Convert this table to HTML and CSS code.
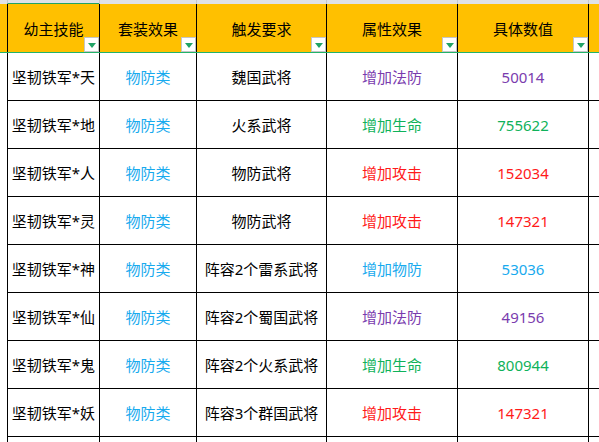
FILE: index.html
```html
<!DOCTYPE html>
<html lang="zh-CN">
<head>
    <meta charset="UTF-8">
    <title>幼主技能</title>
    <link rel="stylesheet" href="styles.css">
</head>
<body>
    <div class="sheet">
        <div class="colbar">
            <span class="gut"></span>
            <span class="c1 sel"></span>
            <span class="c2"></span>
            <span class="c3"></span>
            <span class="c4"></span>
            <span class="c5"></span>
            <span class="tail"></span>
        </div>

        <div class="row head">
            <div class="gut"></div>
            <div class="cell c1">幼主技能<i class="drop"></i></div>
            <div class="cell c2">套装效果<i class="drop"></i></div>
            <div class="cell c3">触发要求<i class="drop"></i></div>
            <div class="cell c4">属性效果<i class="drop"></i></div>
            <div class="cell c5">具体数值<i class="drop"></i></div>
            <div class="cell tail"></div>
        </div>

        <div class="row">
            <div class="gut"></div>
            <div class="cell c1">坚韧铁军*天</div>
            <div class="cell c2 blue">物防类</div>
            <div class="cell c3">魏国武将</div>
            <div class="cell c4 purple">增加法防</div>
            <div class="cell c5 purple">50014</div>
            <div class="cell tail"></div>
        </div>
        <div class="row">
            <div class="gut"></div>
            <div class="cell c1">坚韧铁军*地</div>
            <div class="cell c2 blue">物防类</div>
            <div class="cell c3">火系武将</div>
            <div class="cell c4 green">增加生命</div>
            <div class="cell c5 green">755622</div>
            <div class="cell tail"></div>
        </div>
        <div class="row">
            <div class="gut"></div>
            <div class="cell c1">坚韧铁军*人</div>
            <div class="cell c2 blue">物防类</div>
            <div class="cell c3">物防武将</div>
            <div class="cell c4 red">增加攻击</div>
            <div class="cell c5 red">152034</div>
            <div class="cell tail"></div>
        </div>
        <div class="row">
            <div class="gut"></div>
            <div class="cell c1">坚韧铁军*灵</div>
            <div class="cell c2 blue">物防类</div>
            <div class="cell c3">物防武将</div>
            <div class="cell c4 red">增加攻击</div>
            <div class="cell c5 red">147321</div>
            <div class="cell tail"></div>
        </div>
        <div class="row">
            <div class="gut"></div>
            <div class="cell c1">坚韧铁军*神</div>
            <div class="cell c2 blue">物防类</div>
            <div class="cell c3">阵容2个雷系武将</div>
            <div class="cell c4 blue">增加物防</div>
            <div class="cell c5 blue">53036</div>
            <div class="cell tail"></div>
        </div>
        <div class="row">
            <div class="gut"></div>
            <div class="cell c1">坚韧铁军*仙</div>
            <div class="cell c2 blue">物防类</div>
            <div class="cell c3">阵容2个蜀国武将</div>
            <div class="cell c4 purple">增加法防</div>
            <div class="cell c5 purple">49156</div>
            <div class="cell tail"></div>
        </div>
        <div class="row">
            <div class="gut"></div>
            <div class="cell c1">坚韧铁军*鬼</div>
            <div class="cell c2 blue">物防类</div>
            <div class="cell c3">阵容2个火系武将</div>
            <div class="cell c4 green">增加生命</div>
            <div class="cell c5 green">800944</div>
            <div class="cell tail"></div>
        </div>
        <div class="row">
            <div class="gut"></div>
            <div class="cell c1">坚韧铁军*妖</div>
            <div class="cell c2 blue">物防类</div>
            <div class="cell c3">阵容3个群国武将</div>
            <div class="cell c4 red">增加攻击</div>
            <div class="cell c5 red">147321</div>
            <div class="cell tail"></div>
        </div>
        <div class="row">
            <div class="gut"></div>
            <div class="cell c1"></div>
            <div class="cell c2"></div>
            <div class="cell c3"></div>
            <div class="cell c4"></div>
            <div class="cell c5"></div>
            <div class="cell tail"></div>
        </div>
    </div>
</body>
</html>
```

FILE: styles.css
```css
* {
    margin: 0;
    padding: 0;
    box-sizing: border-box;
}

html, body {
    height: 100%;
    overflow: hidden;
    background: #fff;
}

body {
    font-family: "Noto Sans", "Noto Sans CJK SC", sans-serif;
    font-size: 15px;
    color: #000;
}

.sheet {
    width: 599px;
    height: 442px;
    overflow: hidden;
}

/* column letter strip, mostly cut off */
.colbar {
    display: flex;
    height: 4px;
    background: #dfe2e8;
}

.colbar span {
    display: block;
    height: 4px;
    border-left: 1px solid #c3c8d0;
}

.colbar .gut {
    border-left: none;
}

.colbar .sel {
    border-bottom: 1px solid #21a366;
}

.row {
    display: flex;
    height: 48px;
}

.row.head {
    height: 49px;
    background: #ffc000;
    border-bottom: 1px solid #21b36a;
}

.gut {
    width: 7px;
    flex: none;
}

.cell {
    position: relative;
    display: flex;
    align-items: center;
    justify-content: center;
    flex: none;
    height: 100%;
    border-left: 1px solid #000;
    border-bottom: 1px solid #000;
    white-space: nowrap;
}

.head .cell {
    border-bottom: none;
}

.c1 { width: 92px; }
.c2 { width: 97px; }
.c3 { width: 130px; }
.c4 { width: 131px; }
.c5 { width: 131px; }
.tail { flex: 1; }

.drop {
    position: absolute;
    right: 0;
    bottom: 0;
    width: 15px;
    height: 15px;
    background: #fff;
    border: 1px solid #c6c6c6;
}

.drop::after {
    content: "";
    position: absolute;
    left: 3px;
    top: 5px;
    border-left: 4px solid transparent;
    border-right: 4px solid transparent;
    border-top: 5px solid #21a366;
}

.blue { color: #18aaee; }
.purple { color: #7a3cae; }
.green { color: #0fb25a; }
.red { color: #ff1a1a; }
```
